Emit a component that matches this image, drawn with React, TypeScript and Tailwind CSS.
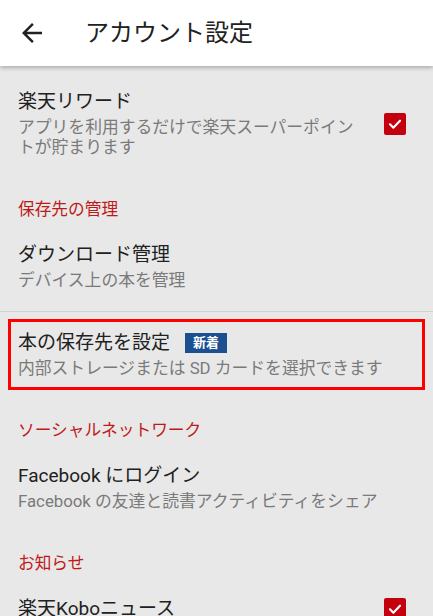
import type { ReactNode } from "react";

const FONT = { fontFamily: 'Roboto, "Noto Sans CJK JP", sans-serif' };

function BackArrow() {
  return (
    <svg width="30" height="30" viewBox="0 0 24 24" className="text-[#212121]">
      <path
        fill="currentColor"
        d="M20 11H7.83l5.59-5.59L12 4l-8 8 8 8 1.41-1.41L7.83 13H20v-2z"
      />
    </svg>
  );
}

function CheckBox() {
  return (
    <div className="flex h-[22px] w-[22px] items-center justify-center rounded-[2px] bg-[#c4000e]">
      <svg width="16" height="16" viewBox="0 0 24 24">
        <path
          d="M4.5 12.5l5 5L19.5 7"
          fill="none"
          stroke="white"
          strokeWidth="3.2"
          strokeLinecap="round"
          strokeLinejoin="round"
        />
      </svg>
    </div>
  );
}

function SectionHeader({ children }: { children: ReactNode }) {
  return (
    <div className="px-[18px] pt-[20px] text-[16.7px] leading-6 text-[#bf1a1a]">
      {children}
    </div>
  );
}

type PrefProps = {
  title: ReactNode;
  summary?: string;
  checked?: boolean;
};

function Pref({ title, summary, checked }: PrefProps) {
  return (
    <div className="flex items-center py-[21px] pl-[18px] pr-[27px]">
      <div className="min-w-0 flex-1">
        <div className="text-[19px] leading-6 text-[#212121]">{title}</div>
        {summary && (
          <div className="mt-[3px] text-[16.8px] leading-5 text-[#7a7a7a]">
            {summary}
          </div>
        )}
      </div>
      {checked !== undefined && (
        <div className="ml-[19px] shrink-0">
          <CheckBox />
        </div>
      )}
    </div>
  );
}

export default function App() {
  return (
    <div className="h-[616px] w-[433px] overflow-hidden bg-[#e8e8e8]" style={FONT}>
      <header className="relative z-10 flex h-[66px] items-center bg-white shadow-[0_2px_4px_rgba(0,0,0,0.25)]">
        <div className="ml-[17px] flex w-[68px] items-center">
          <BackArrow />
        </div>
        <h1 className="text-[24px] font-normal leading-8 text-[#212121]">アカウント設定</h1>
      </header>

      <div className="pt-[3px]">
        <Pref
          title="楽天リワード"
          summary="アプリを利用するだけで楽天スーパーポイントが貯まります"
          checked
        />
      </div>

      <SectionHeader>保存先の管理</SectionHeader>
      <Pref title="ダウンロード管理" summary="デバイス上の本を管理" />
      <div className="h-px bg-[#d2d2d2]" />

      <div className="px-2 pb-[9px] pt-[7px]">
        <div className="border-[3px] border-[#ff0000] px-[7px] py-[9px]">
          <div className="flex items-center text-[19px] leading-6 text-[#212121]">
            本の保存先を設定
            <span className="ml-[15px] flex h-[20px] items-center bg-[#1c4f8f] px-[8px] text-[13px] font-bold text-white">
              新着
            </span>
          </div>
          <div className="mt-[3px] text-[16.8px] leading-5 text-[#7a7a7a]">
            内部ストレージまたは SD カードを選択できます
          </div>
        </div>
      </div>

      <SectionHeader>ソーシャルネットワーク</SectionHeader>
      <Pref
        title="Facebook にログイン"
        summary="Facebook の友達と読書アクティビティをシェア"
      />

      <SectionHeader>お知らせ</SectionHeader>
      <Pref title="楽天Koboニュース" checked />
    </div>
  );
}
